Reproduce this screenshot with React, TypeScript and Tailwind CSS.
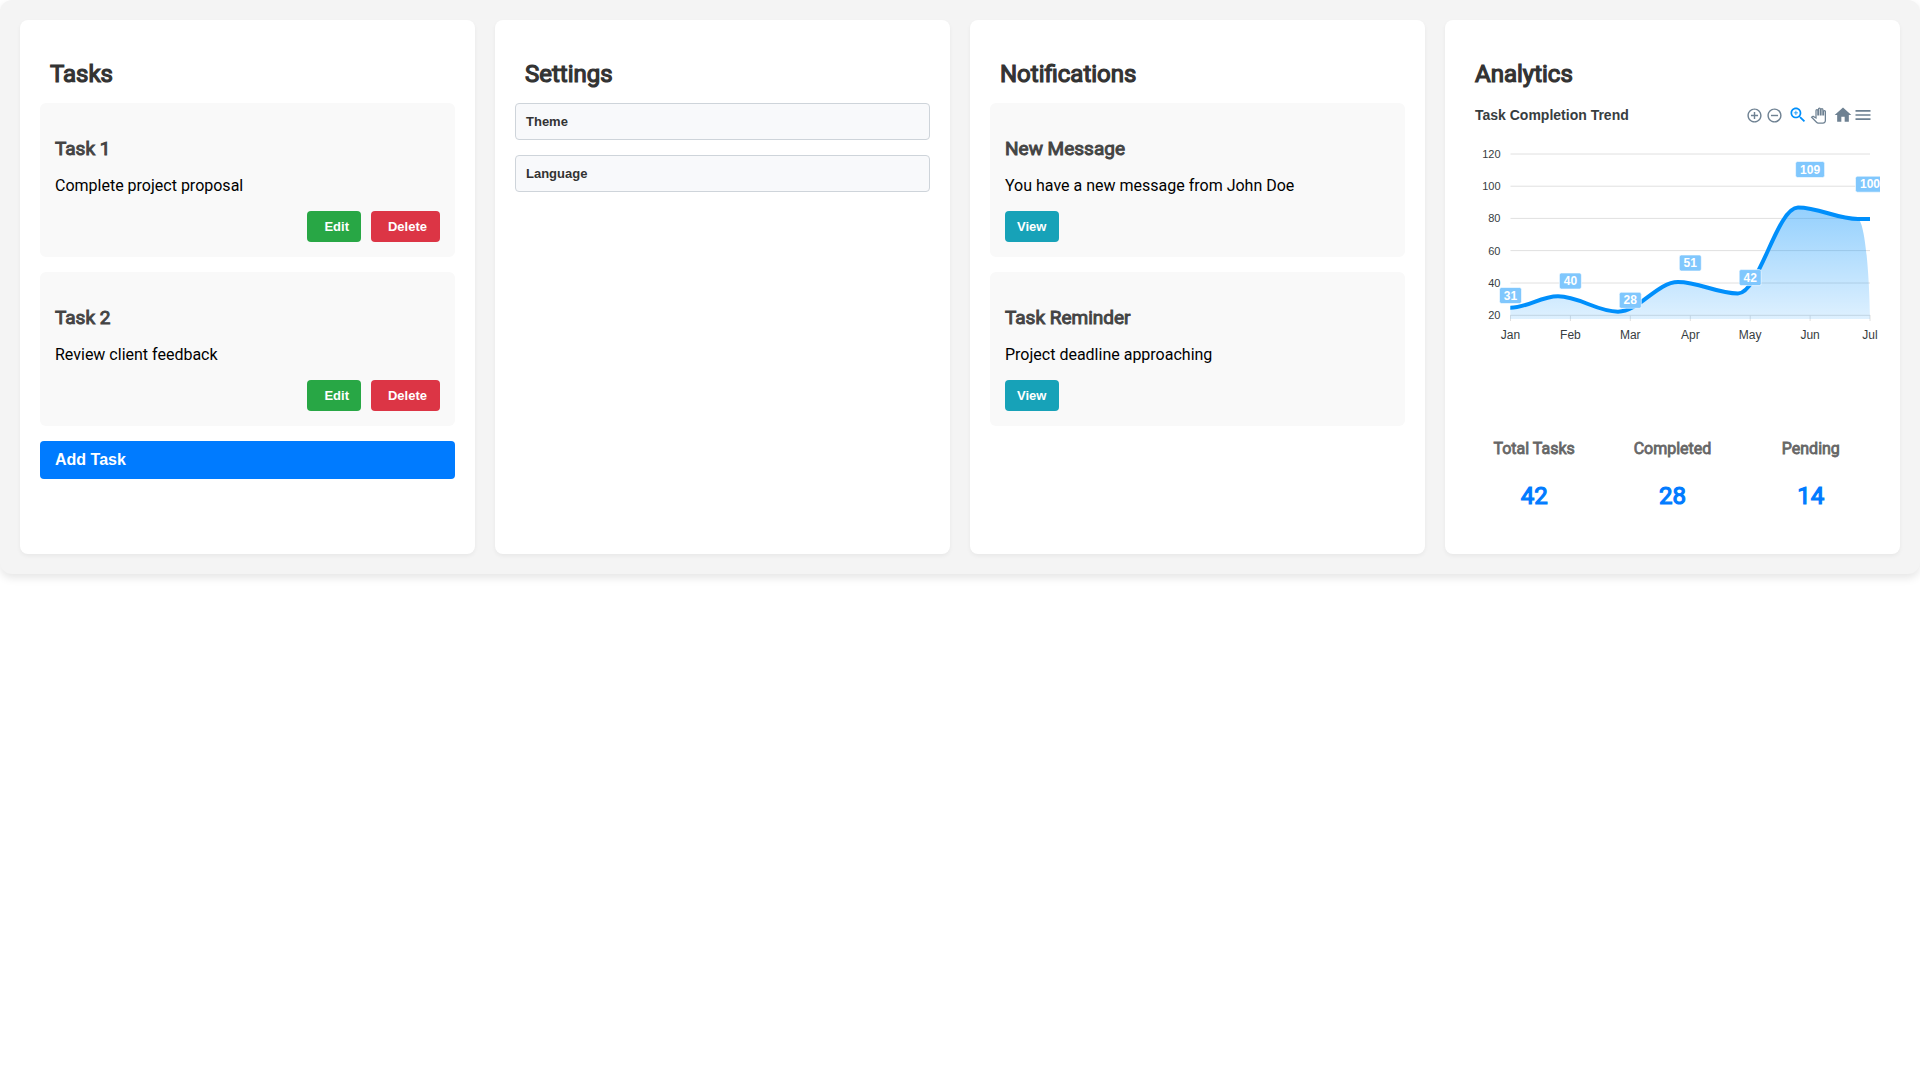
import React from 'react';

const tasks = [
  { id: 1, title: 'Task 1', description: 'Complete project proposal' },
  { id: 2, title: 'Task 2', description: 'Review client feedback' }
];

const settings = ['Theme', 'Language'];

const notifications = [
  { id: 1, title: 'New Message', message: 'You have a new message from John Doe' },
  { id: 2, title: 'Task Reminder', message: 'Project deadline approaching' }
];

const metrics = [
  { label: 'Total Tasks', value: 42 },
  { label: 'Completed', value: 28 },
  { label: 'Pending', value: 14 }
];

const yTicks = [
  { label: '120', y: 27 },
  { label: '100', y: 59.2 },
  { label: '80', y: 91.4 },
  { label: '60', y: 123.6 },
  { label: '40', y: 156 },
  { label: '20', y: 188.3 }
];

const points = [
  { month: 'Jan', value: 31, x: 45.5, labelY: 168.5 },
  { month: 'Feb', value: 40, x: 105.4, labelY: 154 },
  { month: 'Mar', value: 28, x: 165.3, labelY: 173.3 },
  { month: 'Apr', value: 51, x: 225.3, labelY: 136 },
  { month: 'May', value: 42, x: 285.2, labelY: 150.6 },
  { month: 'Jun', value: 109, x: 345.1, labelY: 42.5 },
  { month: 'Jul', value: 100, x: 405, labelY: 57.2 }
];

const curve =
  'M45.3 180.7C62 180.7 76 169.3 93 169.3C114 169.3 132 184.7 153 184.7C174 184.7 192 155 213 155C234 155 252 166.5 273 166.5C294 166.5 312 80.5 333 80.5C354 80.5 372 92 393 92';

const circle =
  'M12 2C6.48 2 2 6.48 2 12s4.48 10 10 10 10-4.48 10-10S17.52 2 12 2zm0 18c-4.41 0-8-3.59-8-8s3.59-8 8-8 8 3.59 8 8-3.59 8-8 8z';

function Card({ title, children }: { title: string; children: React.ReactNode }) {
  return (
    <section className="flex flex-col bg-white rounded-lg p-5 shadow-[0_2px_4px_rgba(0,0,0,0.05)]">
      <h2 className="mt-5 mb-[15px] pl-2.5 text-2xl leading-7 font-normal [-webkit-text-stroke:0.05em] text-[#333]">
        {title}
      </h2>
      {children}
    </section>
  );
}

function Item({ title, text, children }: { title: string; text: string; children: React.ReactNode }) {
  return (
    <article className="mb-[15px] p-[15px] rounded-md bg-[#f9f9f9]">
      <h3 className="mt-5 mb-4 text-[19px] leading-[22px] font-normal [-webkit-text-stroke:0.05em] text-[#444]">
        {title}
      </h3>
      <p className="mb-4 text-base leading-[19px] text-black">{text}</p>
      {children}
    </article>
  );
}

function ToolButton({ label, className = '', children }: { label: string; className?: string; children: React.ReactNode }) {
  return (
    <button
      type="button"
      aria-label={label}
      className={`flex items-center justify-center w-5 h-6 text-[#6e8192] ${className}`}
    >
      {children}
    </button>
  );
}

function Toolbar() {
  return (
    <div className="flex items-center">
      <ToolButton label="Zoom In">
        <svg className="w-[17px] h-[17px] fill-current" viewBox="0 0 24 24">
          <path d={circle} />
          <path d="M13 7h-2v4H7v2h4v4h2v-4h4v-2h-4V7z" />
        </svg>
      </ToolButton>
      <ToolButton label="Zoom Out">
        <svg className="w-[17px] h-[17px] fill-current" viewBox="0 0 24 24">
          <path d={circle} />
          <path d="M7 11v2h10v-2H7z" />
        </svg>
      </ToolButton>
      <ToolButton label="Selection Zoom" className="ml-1">
        <svg className="w-5 h-5 fill-[#008ffb]" viewBox="0 0 24 24">
          <path d="M15.5 14h-.79l-.28-.27C15.41 12.59 16 11.11 16 9.5 16 5.91 13.09 3 9.5 3S3 5.91 3 9.5 5.91 16 9.5 16c1.61 0 3.09-.59 4.23-1.57l.27.28v.79l5 4.99L20.49 19l-4.99-5zm-6 0C7.01 14 5 11.99 5 9.5S7.01 5 9.5 5 14 7.01 14 9.5 11.99 14 9.5 14z" />
          <path d="M12 10h-2v2H9v-2H7V9h2V7h1v2h2v1z" />
        </svg>
      </ToolButton>
      <ToolButton label="Panning">
        <svg className="w-[15px] h-[15px] overflow-visible fill-white stroke-current stroke-2" viewBox="0 0 24 24">
          <path d="M23 5.5V20c0 2.2-1.8 4-4 4h-7.3c-1.08 0-2.1-.43-2.85-1.19L1 14.83s1.26-1.23 1.3-1.25c.22-.19.49-.29.79-.29.22 0 .42.06.6.16.04.01 4.31 2.46 4.31 2.46V4c0-.83.67-1.5 1.5-1.5S11 3.17 11 4v7h1V1.5c0-.83.67-1.5 1.5-1.5S15 .67 15 1.5V11h1V2.5c0-.83.67-1.5 1.5-1.5s1.5.67 1.5 1.5V11h1V5.5c0-.83.67-1.5 1.5-1.5s1.5.67 1.5 1.5z" />
        </svg>
      </ToolButton>
      <ToolButton label="Reset Zoom" className="ml-[5px]">
        <svg className="w-5 h-5 fill-current" viewBox="0 0 24 24">
          <path d="M10 20v-6h4v6h5v-8h3L12 3 2 12h3v8z" />
        </svg>
      </ToolButton>
      <ToolButton label="Menu">
        <svg className="w-5 h-5 fill-current" viewBox="0 0 24 24">
          <path d="M3 18h18v-2H3v2zm0-5h18v-2H3v2zm0-7v2h18V6H3z" />
        </svg>
      </ToolButton>
    </div>
  );
}

function TrendChart() {
  return (
    <div className="font-['Liberation_Sans',Arial,sans-serif]">
      <div className="flex items-center justify-between pl-2.5 pr-[7px]">
        <h3 className="text-sm font-bold text-[#373d3f]">Task Completion Trend</h3>
        <Toolbar />
      </div>
      <svg className="block w-full" viewBox="0 0 415 292" role="img" aria-label="Task Completion Trend">
        <defs>
          <linearGradient id="trendFill" x1="0" y1="0" x2="0" y2="1">
            <stop offset="0" stopColor="#008ffb" stopOpacity="0.42" />
            <stop offset="1" stopColor="#008ffb" stopOpacity="0.13" />
          </linearGradient>
          <clipPath id="plotClip">
            <rect x="45" y="20" width="360" height="180" />
          </clipPath>
        </defs>

        {/* Grid */}
        {yTicks.map((tick) => (
          <g key={tick.label}>
            <line x1="45.5" x2="405" y1={tick.y} y2={tick.y} stroke="#e0e0e0" />
            <text x="35.5" y={tick.y + 4} textAnchor="end" fontSize="11" fill="#373d3f">
              {tick.label}
            </text>
          </g>
        ))}
        {points.map((point) => (
          <g key={point.month}>
            <line x1={point.x} x2={point.x} y1="188" y2="194" stroke="#e0e0e0" />
            <text x={point.x} y="212" textAnchor="middle" fontSize="12" fill="#373d3f">
              {point.month}
            </text>
          </g>
        ))}

        {/* Area */}
        <path d={`${curve}C399 94 404 135 405 192L45.3 192Z`} fill="url(#trendFill)" />
        <path d={`${curve}L408 92`} fill="none" stroke="#008ffb" strokeWidth="4" clipPath="url(#plotClip)" />

        {/* Data labels */}
        {points.map((point) => {
          const width = point.value > 99 ? 29 : 22;
          return (
            <g key={point.month}>
              <rect
                x={point.x - width / 2}
                y={point.labelY - 8}
                width={width}
                height="16"
                rx="2"
                fill="#80c7fd"
                stroke="#fff"
                strokeOpacity="0.6"
              />
              <text
                x={point.x}
                y={point.labelY + 4}
                textAnchor="middle"
                fontSize="12"
                fontWeight="bold"
                fill="#fff"
              >
                {point.value}
              </text>
            </g>
          );
        })}
      </svg>
    </div>
  );
}

export default function App() {
  const actionButton =
    "rounded py-2 text-[13px] leading-[15px] font-bold text-white font-['Liberation_Sans',Arial,sans-serif]";

  return (
    <div className="min-h-screen bg-white font-[Roboto,sans-serif]">
      <main className="grid grid-cols-1 md:grid-cols-2 xl:grid-cols-4 gap-5 p-5 bg-[#f4f4f4] rounded-xl shadow-[0_4px_8px_rgba(0,0,0,0.1)]">
        <Card title="Tasks">
          {tasks.map((task) => (
            <Item key={task.id} title={task.title} text={task.description}>
              <div className="flex justify-end gap-2.5">
                <button type="button" className={`${actionButton} pl-[17px] pr-3 bg-[#28a745]`}>
                  Edit
                </button>
                <button type="button" className={`${actionButton} pl-[17px] pr-[13px] bg-[#dc3545]`}>
                  Delete
                </button>
              </div>
            </Item>
          ))}
          <button
            type="button"
            className="rounded bg-[#007bff] px-[15px] py-2.5 text-left text-base leading-[18px] font-bold text-white font-['Liberation_Sans',Arial,sans-serif]"
          >
            Add Task
          </button>
        </Card>

        <Card title="Settings">
          {settings.map((setting) => (
            <button
              key={setting}
              type="button"
              className="mb-[15px] rounded border border-[#ced4da] bg-[#f8f9fb] p-2.5 text-left text-[13px] leading-[15px] font-bold text-[#333] font-['Liberation_Sans',Arial,sans-serif]"
            >
              {setting}
            </button>
          ))}
        </Card>

        <Card title="Notifications">
          {notifications.map((notification) => (
            <Item key={notification.id} title={notification.title} text={notification.message}>
              <button type="button" className={`${actionButton} block pl-3 pr-[13px] bg-[#17a2b8]`}>
                View
              </button>
            </Item>
          ))}
        </Card>

        <Card title="Analytics">
          <TrendChart />
          <div className="grid grid-cols-3 mt-5 text-center">
            {metrics.map((metric) => (
              <div key={metric.label}>
                <h4 className="mb-6 text-base leading-[19px] font-normal [-webkit-text-stroke:0.05em] text-[#666]">
                  {metric.label}
                </h4>
                <p className="mb-6 text-2xl leading-7 font-normal [-webkit-text-stroke:0.05em] text-[#007bff]">
                  {metric.value}
                </p>
              </div>
            ))}
          </div>
        </Card>
      </main>
    </div>
  );
}
